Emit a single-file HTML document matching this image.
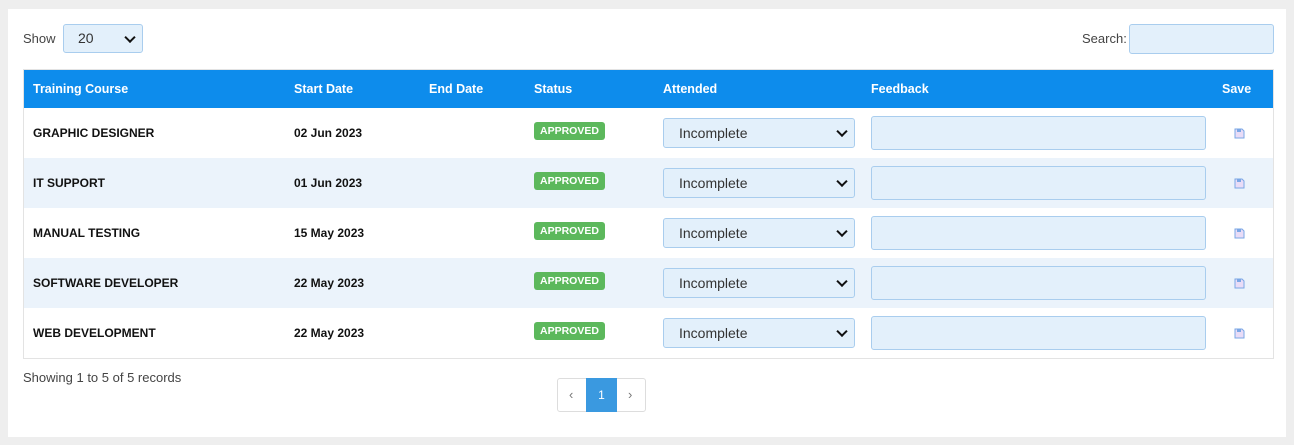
<!DOCTYPE html>
<html><head><style>
body{margin:0;background:#eee;font-family:"Liberation Sans",sans-serif;width:1294px;height:445px;overflow:hidden;position:relative}
.panel{position:absolute;left:8px;top:9px;width:1278px;height:428px;background:#fff}
.abs{position:absolute}
.sel{background:#e3f0fb;border:1px solid #a9cdee;border-radius:3px;box-sizing:border-box;font-size:14px;color:#333}
.chev{position:absolute;right:8px;top:50%;width:6px;height:6px;border-right:2px solid #111;border-bottom:2px solid #111;transform:translateY(-70%) rotate(45deg)}
table{position:absolute;left:23px;top:69px;width:1251px;border-collapse:collapse;border:1px solid #e3e3e3;font-size:12px}
th{background:#0d8cec;color:#fff;text-align:left;height:38px;padding:0 0 0 9px;font-size:12.5px;font-weight:bold}
td{height:50px;padding:0 0 0 9px;font-weight:bold;color:#111;position:relative}
tr.alt td{background:#ebf3fb}
.badge{display:inline-block;background:#5cb85c;color:#fff;font-size:10.5px;font-weight:bold;padding:3px 6px;border-radius:3px;position:relative;top:-2px}
.att{width:192px;height:30px;position:relative;font-weight:normal;padding-left:15px;line-height:28px}
.ta{width:335px;height:34px;background:#e3f0fb;border:1px solid #a9cdee;border-radius:3px;box-sizing:border-box;margin-left:0}
.save{margin-left:12px;display:block}
</style></head><body>
<div class="panel"></div>
<div class="abs" style="left:23px;top:31px;font-size:13px;color:#444">Show</div>
<div class="abs sel" style="left:63px;top:24px;width:80px;height:29px;line-height:27px;padding-left:14px">20<span class="chev"></span></div>
<div class="abs" style="left:1082px;top:31px;font-size:13px;color:#444">Search:</div>
<div class="abs sel" style="left:1129px;top:24px;width:145px;height:30px"></div>
<table>
<tr><th style="width:252px">Training Course</th><th style="width:126px">Start Date</th><th style="width:96px">End Date</th><th style="width:120px">Status</th><th style="width:199px">Attended</th><th style="width:342px">Feedback</th><th>Save</th></tr>
<tr><td>GRAPHIC DESIGNER</td><td>02 Jun 2023</td><td></td><td><span class="badge">APPROVED</span></td><td><div class="sel att">Incomplete<span class="chev"></span></div></td><td><div class="ta"></div></td><td><svg class="save" width="11" height="11" viewBox="0 0 11 11"><path d="M1 1h7l2 2v7H1z" fill="#e9dcf7" stroke="#7aa7e6"/><rect x="3" y="1" width="4" height="3" fill="#7aa7e6"/></svg></td></tr>
<tr class="alt"><td>IT SUPPORT</td><td>01 Jun 2023</td><td></td><td><span class="badge">APPROVED</span></td><td><div class="sel att">Incomplete<span class="chev"></span></div></td><td><div class="ta"></div></td><td><svg class="save" width="11" height="11" viewBox="0 0 11 11"><path d="M1 1h7l2 2v7H1z" fill="#e9dcf7" stroke="#7aa7e6"/><rect x="3" y="1" width="4" height="3" fill="#7aa7e6"/></svg></td></tr>
<tr><td>MANUAL TESTING</td><td>15 May 2023</td><td></td><td><span class="badge">APPROVED</span></td><td><div class="sel att">Incomplete<span class="chev"></span></div></td><td><div class="ta"></div></td><td><svg class="save" width="11" height="11" viewBox="0 0 11 11"><path d="M1 1h7l2 2v7H1z" fill="#e9dcf7" stroke="#7aa7e6"/><rect x="3" y="1" width="4" height="3" fill="#7aa7e6"/></svg></td></tr>
<tr class="alt"><td>SOFTWARE DEVELOPER</td><td>22 May 2023</td><td></td><td><span class="badge">APPROVED</span></td><td><div class="sel att">Incomplete<span class="chev"></span></div></td><td><div class="ta"></div></td><td><svg class="save" width="11" height="11" viewBox="0 0 11 11"><path d="M1 1h7l2 2v7H1z" fill="#e9dcf7" stroke="#7aa7e6"/><rect x="3" y="1" width="4" height="3" fill="#7aa7e6"/></svg></td></tr>
<tr><td>WEB DEVELOPMENT</td><td>22 May 2023</td><td></td><td><span class="badge">APPROVED</span></td><td><div class="sel att">Incomplete<span class="chev"></span></div></td><td><div class="ta"></div></td><td><svg class="save" width="11" height="11" viewBox="0 0 11 11"><path d="M1 1h7l2 2v7H1z" fill="#e9dcf7" stroke="#7aa7e6"/><rect x="3" y="1" width="4" height="3" fill="#7aa7e6"/></svg></td></tr>
</table>
<div class="abs" style="left:23px;top:370px;font-size:13px;color:#444">Showing 1 to 5 of 5 records</div>
<div class="abs" style="left:557px;top:378px;width:89px;height:34px;border:1px solid #ddd;border-radius:3px;box-sizing:border-box"></div>
<div class="abs" style="left:569px;top:387px;font-size:13px;color:#777">‹</div>
<div class="abs" style="left:586px;top:378px;width:31px;height:34px;background:#3a99e0;color:#fff;font-size:12px;text-align:center;line-height:34px">1</div>
<div class="abs" style="left:628px;top:387px;font-size:13px;color:#777">›</div>
</body></html>
